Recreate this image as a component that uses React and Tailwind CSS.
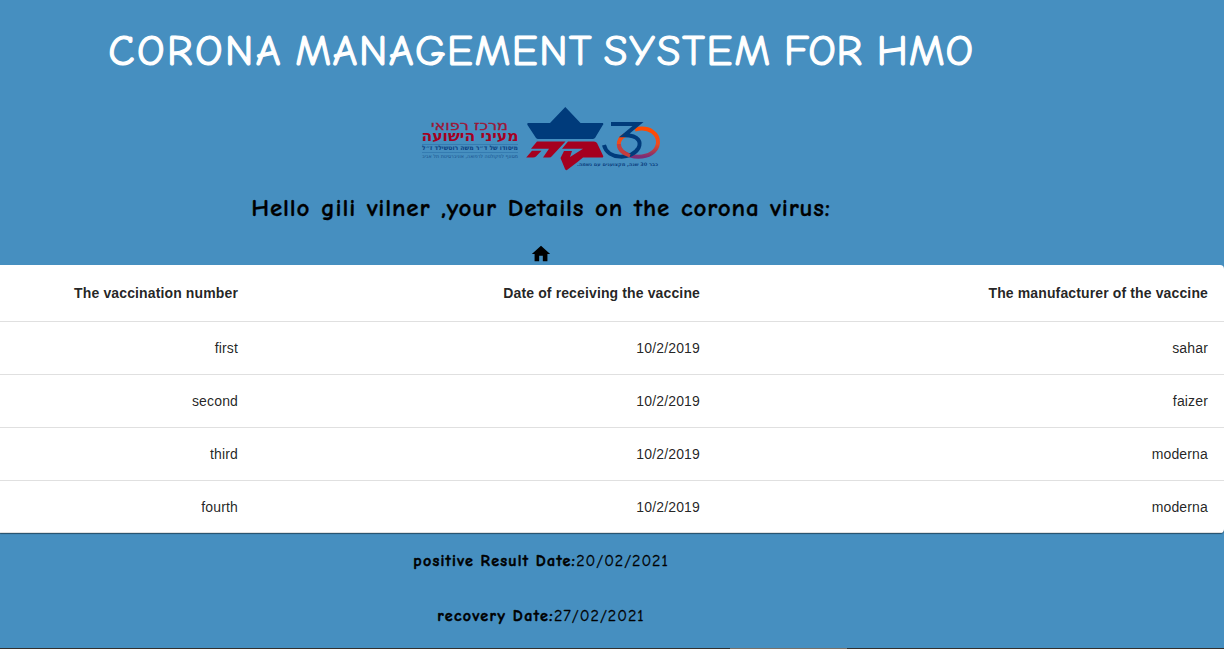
import React from "react";

const rows = [
  ["first", "10/2/2019", "sahar"],
  ["second", "10/2/2019", "faizer"],
  ["third", "10/2/2019", "moderna"],
  ["fourth", "10/2/2019", "moderna"],
];

const comic = "font-['Comic_Sans_MS','Comic_Neue',Lato,sans-serif]";

function Logo() {
  return (
    <svg className="ml-[2px] block h-[70px] w-[244px]" viewBox="420 103 244 70" aria-label="logo">
      <defs>
        <linearGradient id="ring" x1="0" y1="0" x2="0" y2="1">
          <stop offset="0" stopColor="#ff4b00" />
          <stop offset="0.55" stopColor="#ef4c1c" />
          <stop offset="1" stopColor="#7b2c76" />
        </linearGradient>
      </defs>
      <g fontFamily="'DejaVu Sans', 'Liberation Sans', sans-serif" textAnchor="middle" direction="rtl">
        <text x="469.5" y="129.8" fontSize="12" fill="#9c1536" stroke="#9c1536" strokeWidth=".3" textLength="77" lengthAdjust="spacingAndGlyphs">מרכז רפואי</text>
        <text x="470" y="140.5" fontSize="14" fontWeight="bold" fill="#a5001f" textLength="97" lengthAdjust="spacingAndGlyphs">מעיני הישועה</text>
        <text x="470" y="150" fontSize="6.5" fontWeight="bold" fill="#0d4280" textLength="96" lengthAdjust="spacingAndGlyphs">מיסודו של ד״ר משה רוטשילד ז״ל</text>
        <text x="470" y="157.5" fontSize="5.2" fill="#174f8c" textLength="96" lengthAdjust="spacingAndGlyphs">מסונף לפקולטה לרפואה, אוניברסיטת תל אביב</text>
        <text x="617.5" y="165.5" fontSize="4.8" fontWeight="bold" fill="#0d4280" textLength="81" lengthAdjust="spacingAndGlyphs">כבר 30 שנה, מקצוענים עם נשמה.</text>
      </g>
      <path d="M422 144.5H518M422 152.5H518" stroke="#2468a2" strokeWidth=".5" />
      <path d="M528 123H550L565.3 107L580.5 123H603Q604 124 602.5 125.5L595 138Q594 139 592.5 139H538Q537 139 536 138L527.5 125Q526.5 123.5 528 123Z" fill="#003b7b" />
      <path d="M537 141.5H565.5L552 156Q551 157.6 549 157.6H543L549 148.8H531Z" fill="#a5001f" />
      <path d="M532 150.8H541.5L536 156.5Q535 157.6 533 157.6H526.2Z" fill="#a5001f" />
      <path d="M568 141.5H594Q596 141.5 597 143L603 155.5Q604 157.6 601.5 157.6H583L577.5 162L567 170Q565.5 170.5 565 169L560.5 158L564 151H572L570 157L583 148.8H562Z" fill="#a5001f" />
      <path d="M635 129.5C650 126 658.5 134 658 143C657 152 648 156.7 638.5 156.7C627 156.7 617 150 619 142C620 138 623 135.5 628 134" fill="none" stroke="url(#ring)" strokeWidth="4" />
      <path d="M611 124H638L624.5 135.2C640 135.2 641 143 638.5 148C632 160 607.5 160 604 145" fill="none" stroke="#003b7b" strokeWidth="4" />
      <path d="M619 144C619 150 624 154 630 155.8" fill="none" stroke="#c53d3e" strokeWidth="3.8" />
    </svg>
  );
}

function Cell({ children, header }) {
  return (
    <div
      className={
        "flex items-center justify-end border-b border-[#e0e0e0] pr-4 pt-px text-[14px] whitespace-nowrap " +
        (header ? "font-bold tracking-[0.13px]" : "tracking-[0.15px]")
      }
    >
      {children}
    </div>
  );
}

export default function App() {
  return (
    <div className="flex h-[649px] w-full flex-col overflow-hidden bg-[#468fc0]">
      <div className={"flex w-[1082px] flex-col items-center " + comic}>
        <h1 className="flex h-[103px] items-start pt-[19px] text-[43px] leading-[64px] font-normal whitespace-nowrap text-white [-webkit-text-stroke:1.2px_white]">
          <span className="mr-[12px] tracking-[2.4px]">CORONA</span>
          <span className="mr-[11px] tracking-[1.4px]">MANAGEMENT</span>
          <span className="mr-[12px] tracking-[1.8px]">SYSTEM</span>
          <span className="mr-[14px] tracking-[0.6px]">FOR</span>
          <span className="tracking-[0.8px]">HMO</span>
        </h1>
        <Logo />
        <h2 className="h-[71px] pt-[17px] text-[25px] leading-[36px] font-bold tracking-[0.8px] [word-spacing:1.2px] whitespace-nowrap text-black [-webkit-text-stroke:0.3px_black]">
          Hello gili vilner ,your Details on the corona virus:
        </h2>
        <div className="flex h-[21px] items-end">
          <svg className="block size-[22px] shrink-0" viewBox="0 0 24 24" fill="#000">
            <path d="M10 20v-6h4v6h5v-8h3L12 3 2 12h3v8z" />
          </svg>
        </div>
      </div>
      <div className="grid h-[268px] w-full shrink-0 grid-cols-[254px_462px_508px] grid-rows-[57px_53px_53px_53px_52px] overflow-hidden rounded-r-[4px] bg-white font-['Liberation_Sans',Arial,sans-serif] text-black/87 shadow-[0_1px_1px_rgba(0,0,0,0.45)]">
        <Cell header>The vaccination number</Cell>
        <Cell header>Date of receiving the vaccine</Cell>
        <Cell header>The manufacturer of the vaccine</Cell>
        {rows.map((row) => row.map((value, i) => <Cell key={row[0] + i}>{value}</Cell>))}
      </div>
      <div className={"flex w-[1082px] flex-1 flex-col items-center gap-[31px] pt-[16px] text-[16px] leading-6 text-black " + comic}>
        <p className="whitespace-nowrap"><b className="tracking-[1.25px] [word-spacing:-0.5px] [-webkit-text-stroke:0.5px_black]">positive Result Date:</b><span className="tracking-[0.95px] [-webkit-text-stroke:0.3px_black]">20/02/2021</span></p>
        <p className="whitespace-nowrap"><b className="tracking-[1.4px] [word-spacing:-0.5px] [-webkit-text-stroke:0.5px_black]">recovery Date:</b><span className="tracking-[1px] [-webkit-text-stroke:0.3px_black]">27/02/2021</span></p>
      </div>
      <div className="flex h-px w-full shrink-0 bg-[#33302d]">
        <div className="ml-[730px] w-[117px] bg-[#77716a]" />
      </div>
    </div>
  );
}
